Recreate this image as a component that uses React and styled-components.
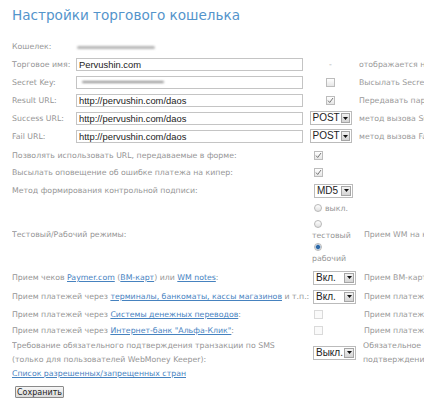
import React from "react";
import styled, { createGlobalStyle } from "styled-components";

const Global = createGlobalStyle`
  html, body {
    margin: 0;
    padding: 0;
    background: #fff;
    overflow: hidden;
  }
  body {
    font-family: "DejaVu Sans", Verdana, sans-serif;
    font-size: 7.8px;
    color: #959595;
  }
`;

const Page = styled.div`
  width: 424px;
  height: 413px;
  padding: 6px 0 0 12px;
  box-sizing: border-box;
  white-space: nowrap;
`;

const Title = styled.h1`
  margin: 0;
  font-family: "DejaVu Sans", Verdana, sans-serif;
  font-weight: normal;
  font-size: 13.6px;
  line-height: 18px;
  color: #5394cb;
`;

const TopGrid = styled.div`
  display: grid;
  grid-template-columns: 64px 227px 55px auto;
  grid-auto-rows: 18px;
  align-items: center;
  margin-top: 13px;
`;

const Label = styled.div`
  color: #959595;
`;

const Center = styled.div`
  display: flex;
  justify-content: center;
  align-items: center;
  color: #aaa;
`;

const Note = styled.div`
  padding-left: 1px;
  color: #999;
  overflow: hidden;
`;

const Field = styled.div`
  height: 13px;
  box-sizing: border-box;
  border: 1px solid #c4c4c4;
  background: #fff;
  padding-left: 2px;
  display: flex;
  align-items: center;
  font-family: "Liberation Sans", Arial, sans-serif;
  font-size: 9.4px;
  color: #222;
`;

const Smudge = styled.span`
  display: inline-block;
  width: ${p => p.w}px;
  height: ${p => p.h || 3}px;
  margin-left: ${p => p.ml || 0}px;
  border-radius: 2px;
  background: ${p => p.c || "#b5b5b5"};
  filter: blur(1px);
`;

const SelectBox = styled.div`
  display: flex;
  align-items: stretch;
  width: ${p => p.w}px;
  height: 14px;
  box-sizing: border-box;
  border: 1px solid #bbb;
  background: #fff;
  margin-left: ${p => p.ml || 0}px;
  font-family: "Liberation Sans", Arial, sans-serif;
  font-size: 10px;
  color: #222;
`;

const SelectText = styled.span`
  flex: 1;
  display: flex;
  align-items: center;
  padding-left: 2px;
  line-height: 12px;
`;

const SelectButton = styled.span`
  width: 10px;
  margin: 1px;
  box-sizing: border-box;
  border: 1px solid #a5a5a5;
  background: linear-gradient(#f2f2f2, #d4d4d4);
  display: flex;
  align-items: center;
  justify-content: center;
`;

const Select = ({ value, w, ml }) => (
  <SelectBox w={w} ml={ml}>
    <SelectText>{value}</SelectText>
    <SelectButton>
      <svg width="5" height="3" viewBox="0 0 5 3">
        <path d="M0 0h5L2.5 3z" fill="#111" />
      </svg>
    </SelectButton>
  </SelectBox>
);

const Box = styled.span`
  display: inline-flex;
  width: 9px;
  height: 9px;
  box-sizing: border-box;
  border: 1px solid ${p => (p.faint ? "#dadada" : "#bcbcbc")};
  background: ${p => (p.faint ? "#fafafa" : "linear-gradient(#fff, #e6e6e6)")};
  margin-left: ${p => p.ml || 0}px;
  align-items: center;
  justify-content: center;
`;

const Check = ({ on, faint, ml }) => (
  <Box faint={faint} ml={ml}>
    {on && (
      <svg width="7" height="7" viewBox="0 0 7 7">
        <path d="M1 3.6l1.7 1.9L6 1" stroke="#777" strokeWidth="1" fill="none" />
      </svg>
    )}
  </Box>
);

const BottomGrid = styled.div`
  display: grid;
  grid-template-columns: 300px 51px auto;
  margin-top: 2px;
`;

const Cell = styled.div`
  height: ${p => p.h}px;
  display: flex;
  align-items: center;
  overflow: hidden;
`;

const Wrap = styled.div`
  height: ${p => p.h}px;
  display: flex;
  align-items: center;
  white-space: normal;
  line-height: 14px;
  overflow: hidden;
`;

const Link = styled.a`
  color: #4682bf;
  text-decoration: underline;
`;

const Radios = styled.div`
  width: 44px;
  height: ${p => p.h}px;
  box-sizing: border-box;
  padding-top: 3px;
  white-space: normal;
  line-height: 11.5px;
  color: #959595;
`;

const RadioOption = styled.div`
  margin-bottom: ${p => p.mb || 0}px;
`;

const RadioDot = styled.span`
  display: inline-block;
  width: 8px;
  height: 8px;
  box-sizing: border-box;
  border-radius: 50%;
  border: 1px solid #b8b8b8;
  background: ${p =>
    p.on
      ? "radial-gradient(circle, #2f6aa8 0 1.6px, #8fb2d6 2.2px, #e9eef4 3px)"
      : "linear-gradient(#fff, #e0e0e0)"};
  margin: 0 3px 0 2px;
  vertical-align: -1px;
`;

const ListLink = styled.div`
  height: 14px;
  line-height: 14px;
`;

const SaveButton = styled.button`
  margin: 5px 0 0 3px;
  height: 12px;
  padding: 0 1px;
  border: 1px solid #8a8a8a;
  border-radius: 1px;
  background: linear-gradient(#f6f6f6, #dcdcdc);
  font-family: "DejaVu Sans", Verdana, sans-serif;
  font-size: 8px;
  line-height: 9px;
  color: #222;
`;

export default function App() {
  return (
    <>
      <Global />
      <Page>
        <Title>Настройки торгового кошелька</Title>

        <TopGrid>
          <Label>Кошелек:</Label>
          <div>
            <Smudge w={78} ml={1} />
          </div>
          <div />
          <div />

          <Label>Торговое имя:</Label>
          <Field>Pervushin.com</Field>
          <Center>-</Center>
          <Note>отображается на странице</Note>

          <Label>Secret Key:</Label>
          <Field>
            <Smudge w={82} h={2} ml={3} c="#8c8c8c" />
          </Field>
          <Center>
            <Check />
          </Center>
          <Note>Высылать Secret Key</Note>

          <Label>Result URL:</Label>
          <Field>http://pervushin.com/daos</Field>
          <Center>
            <Check on />
          </Center>
          <Note>Передавать параметры</Note>

          <Label>Success URL:</Label>
          <Field>http://pervushin.com/daos</Field>
          <Center>
            <Select value="POST" w={42} />
          </Center>
          <Note>метод вызова Success</Note>

          <Label>Fail URL:</Label>
          <Field>http://pervushin.com/daos</Field>
          <Center>
            <Select value="POST" w={42} />
          </Center>
          <Note>метод вызова Fail</Note>
        </TopGrid>

        <BottomGrid>
          <Cell h={17}>Позволять использовать URL, передаваемые в форме:</Cell>
          <Cell h={17}>
            <Check on ml={2} />
          </Cell>
          <Cell h={17} />

          <Cell h={17}>Высылать оповещение об ошибке платежа на кипер:</Cell>
          <Cell h={17}>
            <Check on ml={2} />
          </Cell>
          <Cell h={17} />

          <Cell h={19}>Метод формирования контрольной подписи:</Cell>
          <Cell h={19}>
            <Select value="MD5" w={39} ml={2} />
          </Cell>
          <Cell h={19} />

          <Cell h={68}>Тестовый/Рабочий режимы:</Cell>
          <Radios h={68}>
            <RadioOption mb={4}>
              <RadioDot />
              выкл.
            </RadioOption>
            <RadioOption>
              <RadioDot />
              тестовый
            </RadioOption>
            <RadioOption>
              <RadioDot on />
              рабочий
            </RadioOption>
          </Radios>
          <Cell h={68}>
            <Note>Прием WM на кошелек</Note>
          </Cell>

          <Cell h={19}>
            <span>
              Прием чеков <Link>Paymer.com</Link> (<Link>ВМ-карт</Link>) или{" "}
              <Link>WM notes</Link>:
            </span>
          </Cell>
          <Cell h={19}>
            <Select value="Вкл." w={43} ml={1} />
          </Cell>
          <Cell h={19}>
            <Note>Прием ВМ-карт</Note>
          </Cell>

          <Cell h={19}>
            <span>
              Прием платежей через{" "}
              <Link>терминалы, банкоматы, кассы магазинов</Link> и т.п.:
            </span>
          </Cell>
          <Cell h={19}>
            <Select value="Вкл." w={43} ml={1} />
          </Cell>
          <Cell h={19}>
            <Note>Прием платежей</Note>
          </Cell>

          <Cell h={17}>
            <span>
              Прием платежей через <Link>Системы денежных переводов</Link>:
            </span>
          </Cell>
          <Cell h={17}>
            <Check faint ml={2} />
          </Cell>
          <Cell h={17}>
            <Note>Прием платежей</Note>
          </Cell>

          <Cell h={15}>
            <span>
              Прием платежей через <Link>Интернет-банк "Альфа-Клик"</Link>:
            </span>
          </Cell>
          <Cell h={15}>
            <Check faint ml={2} />
          </Cell>
          <Cell h={15}>
            <Note>Прием платежей</Note>
          </Cell>

          <Wrap h={29}>
            Требование обязательного подтверждения транзакции по SMS
            <br />
            (только для пользователей WebMoney Keeper):
          </Wrap>
          <Cell h={29}>
            <Select value="Выкл." w={43} ml={1} />
          </Cell>
          <Wrap h={29}>
            Обязательное
            <br />
            подтверждение
          </Wrap>
        </BottomGrid>

        <ListLink>
          <Link>Список разрешенных/запрещенных стран</Link>
        </ListLink>
        <SaveButton>Сохранить</SaveButton>
      </Page>
    </>
  );
}
